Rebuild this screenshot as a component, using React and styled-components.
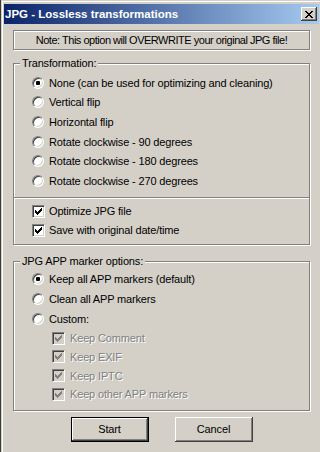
import styled, { createGlobalStyle } from 'styled-components';

const GlobalStyle = createGlobalStyle`
  html, body {
    margin: 0;
    padding: 0;
  }

  body {
    width: 320px;
    height: 452px;
    overflow: hidden;
    background: #3a3d33;
    font-family: 'Liberation Sans', Arial, sans-serif;
    font-size: 11px;
    color: #000;
  }
`;

const etched = `
  border: 1px solid #808080;
  box-shadow: inset 1px 1px 0 #fff, 1px 1px 0 #fff;
`;

const Window = styled.div`
  box-sizing: border-box;
  width: 319px;
  height: 452px;
  margin-left: 1px;
  padding: 4px 1px 0 3px;
  background: #d4d0c8;
  box-shadow: inset 1px 1px 0 #d4d0c8, inset 2px 2px 0 #fff;
`;

const TitleBar = styled.div`
  display: flex;
  align-items: center;
  justify-content: space-between;
  height: 20px;
  padding: 0 2px 0 1px;
  background: linear-gradient(to right, #0a246a, #a6caf0);
`;

const Title = styled.span`
  color: #fff;
  font-weight: bold;
  font-size: 11.5px;
`;

const CloseButton = styled.div`
  display: flex;
  align-items: center;
  justify-content: center;
  width: 16px;
  height: 14px;
  box-sizing: border-box;
  padding: 1px 0 0 0;
  background: #d4d0c8;
  box-shadow: inset -1px -1px 0 #404040, inset 1px 1px 0 #fff,
    inset -2px -2px 0 #808080;
`;

const Client = styled.div`
  padding: 6px 9px 0 9px;
  letter-spacing: -0.15px;
`;

const Note = styled.div`
  box-sizing: border-box;
  height: 20px;
  line-height: 18px;
  text-align: center;
  letter-spacing: -0.48px;
  ${etched}
`;

const Group = styled.fieldset`
  margin: ${(p) => p.$top}px 0 0 0;
  padding: 0;
  min-width: 0;
  ${etched}
`;

const Legend = styled.legend`
  margin-left: 6px;
  padding: 0 2px;
  line-height: 13px;
  background: #d4d0c8;
`;

const GroupBody = styled.div`
  padding: ${(p) => p.$pad};
`;

const CheckPanel = styled.div`
  padding: 4px 0 4px 18px;
  border: 1px solid #808080;
  border-top: none;
  box-shadow: inset 1px 0 0 #fff, 1px 1px 0 #fff;
`;

const Row = styled.label`
  display: flex;
  align-items: center;
  height: ${(p) => p.$h}px;
  padding-left: ${(p) => p.$indent || 0}px;
  gap: ${(p) => p.$gap}px;
  color: ${(p) => (p.$disabled ? '#808080' : '#000')};
  text-shadow: ${(p) => (p.$disabled ? '1px 1px 0 #fff' : 'none')};
  white-space: nowrap;
`;

const RadioDot = styled.span`
  position: relative;
  flex: none;
  width: 12px;
  height: 12px;
  box-sizing: border-box;
  border-radius: 50%;
  background: #fff;
  border: 1px solid;
  border-color: #808080 #fff #fff #808080;
  box-shadow: inset 1px 1px 0 #404040, inset -1px -1px 0 #d4d0c8;

  &::after {
    content: '';
    display: ${(p) => (p.$checked ? 'block' : 'none')};
    position: absolute;
    left: 3px;
    top: 3px;
    width: 4px;
    height: 4px;
    border-radius: 1px;
    background: #000;
  }
`;

const CheckBox = styled.span`
  display: flex;
  flex: none;
  align-items: center;
  justify-content: center;
  width: 13px;
  height: 13px;
  box-sizing: border-box;
  background: ${(p) => (p.$disabled ? '#d4d0c8' : '#fff')};
  border: 1px solid;
  border-color: #808080 #fff #fff #808080;
  box-shadow: inset 1px 1px 0 #404040, inset -1px -1px 0 #d4d0c8;
  color: ${(p) => (p.$disabled ? '#808080' : '#000')};
`;

const ButtonRow = styled.div`
  display: flex;
  justify-content: center;
  gap: 26px;
  margin-top: 6px;
`;

const Button = styled.button`
  width: 78px;
  height: 25px;
  padding: 0;
  font-family: inherit;
  font-size: 11px;
  letter-spacing: -0.15px;
  color: #000;
  background: #d4d0c8;
  border: ${(p) => (p.$default ? '1px solid #000' : 'none')};
  box-shadow: inset -1px -1px 0 #404040, inset 1px 1px 0 #fff,
    inset -2px -2px 0 #808080, inset 2px 2px 0 #d4d0c8;
`;

const CheckMark = () => (
  <svg width='7' height='7' viewBox='0 0 7 7' shapeRendering='crispEdges'>
    <path
      fill='currentColor'
      d='M0 2h1v3H0z M1 3h1v3H1z M2 4h1v3H2z M3 3h1v3H3z M4 2h1v3H4z M5 1h1v3H5z M6 0h1v3H6z'
    />
  </svg>
);

const CloseGlyph = () => (
  <svg width='8' height='7' viewBox='0 0 8 7' shapeRendering='crispEdges'>
    <path
      fill='#000'
      d='M0 0h2v1H0z M6 0h2v1H6z M1 1h2v1H1z M5 1h2v1H5z M2 2h4v1H2z M3 3h2v1H3z M2 4h4v1H2z M1 5h2v1H1z M5 5h2v1H5z M0 6h2v1H0z M6 6h2v1H6z'
    />
  </svg>
);

const Radio = ({ label, checked, h }) => (
  <Row $h={h} $gap={5}>
    <RadioDot $checked={checked} />
    {label}
  </Row>
);

const Check = ({ label, checked, disabled, h, indent }) => (
  <Row $h={h} $gap={indent ? 5 : 4} $indent={indent} $disabled={disabled}>
    <CheckBox $disabled={disabled}>{checked && <CheckMark />}</CheckBox>
    {label}
  </Row>
);

const transformations = [
  'None (can be used for optimizing and cleaning)',
  'Vertical flip',
  'Horizontal flip',
  'Rotate clockwise - 90 degrees',
  'Rotate clockwise - 180 degrees',
  'Rotate clockwise - 270 degrees',
];

const markerOptions = [
  'Keep all APP markers (default)',
  'Clean all APP markers',
  'Custom:',
];

const customMarkers = [
  'Keep Comment',
  'Keep EXIF',
  'Keep IPTC',
  'Keep other APP markers',
];

const App = () => (
  <>
    <GlobalStyle />
    <Window>
      <TitleBar>
        <Title>JPG - Lossless transformations</Title>
        <CloseButton>
          <CloseGlyph />
        </CloseButton>
      </TitleBar>
      <Client>
        <Note>Note: This option will OVERWRITE your original JPG file!</Note>

        <Group $top={7}>
          <Legend>Transformation:</Legend>
          <GroupBody $pad='3px 0 6px 18px'>
            {transformations.map((t, i) => (
              <Radio key={t} label={t} checked={i === 0} h={19.6} />
            ))}
          </GroupBody>
        </Group>
        <CheckPanel>
          <Check label='Optimize JPG file' checked h={19} />
          <Check label='Save with original date/time' checked h={19} />
        </CheckPanel>

        <Group $top={10}>
          <Legend>JPG APP marker options:</Legend>
          <GroupBody $pad='2px 0 6px 18px'>
            {markerOptions.map((m, i) => (
              <Radio key={m} label={m} checked={i === 0} h={19.7} />
            ))}
            {customMarkers.map((m) => (
              <Check key={m} label={m} checked disabled h={18.8} indent={20} />
            ))}
          </GroupBody>
        </Group>

        <ButtonRow>
          <Button $default>Start</Button>
          <Button>Cancel</Button>
        </ButtonRow>
      </Client>
    </Window>
  </>
);

export default App;
